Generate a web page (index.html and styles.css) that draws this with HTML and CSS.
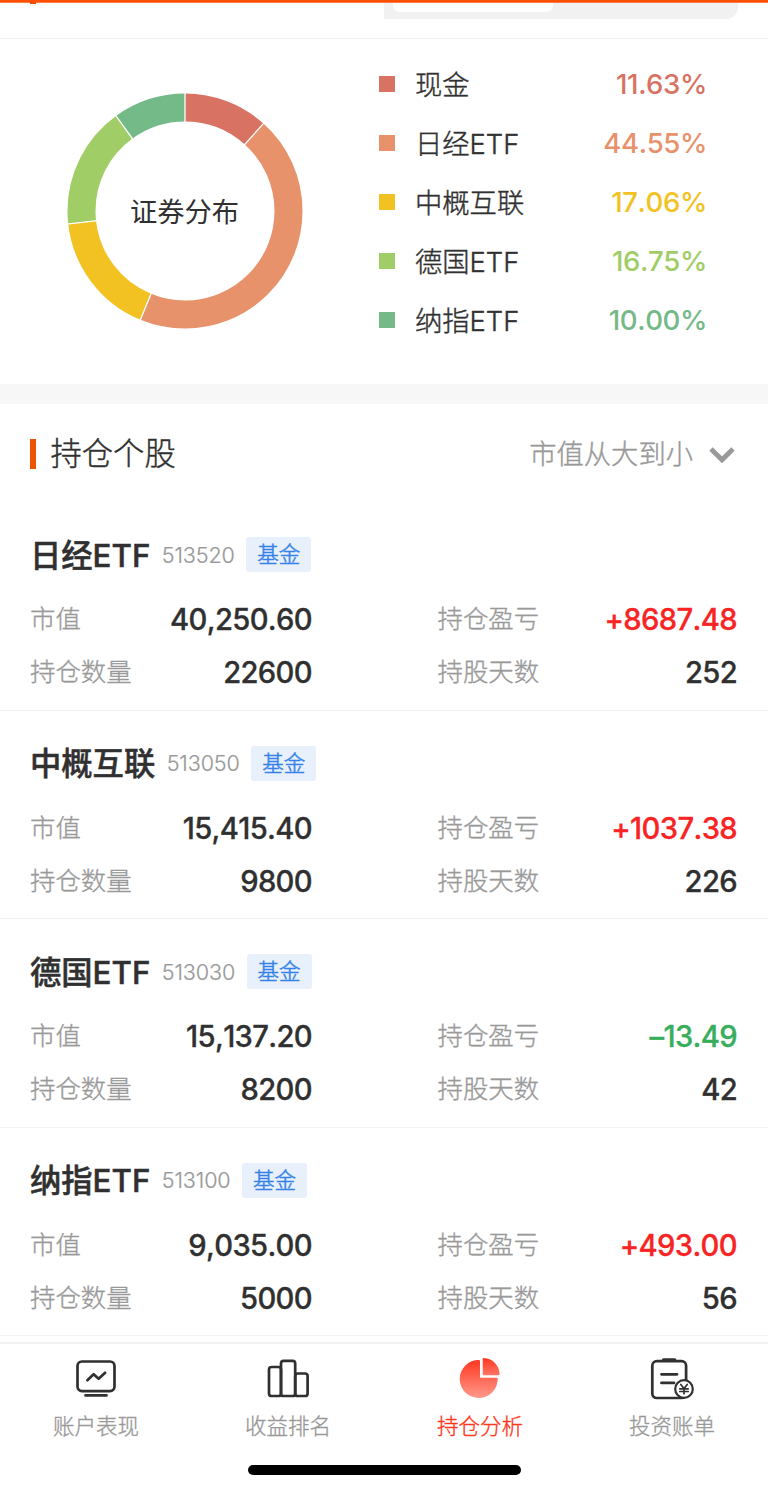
FILE: index.html
```html
<!DOCTYPE html>
<html lang="zh-CN">
<head>
<meta charset="utf-8">
<title>持仓分析</title>
<link rel="stylesheet" href="styles.css">
</head>
<body>
<div class="screen">
  <header class="top">
    <div class="segment"><div class="segment-thumb"></div></div>
    <div class="progress"></div>
    <div class="marker"></div>
  </header>

  <section class="distribution">
    <svg class="donut" viewBox="0 0 240 240">
      <g fill="none" stroke-width="28" transform="rotate(-90 120 120)">
        <circle cx="120" cy="120" r="103.5" pathLength="100" stroke="#d87263" stroke-dasharray="11.64 88.36"/>
        <circle cx="120" cy="120" r="103.5" pathLength="100" stroke="#e7926b" stroke-dasharray="44.55 55.45" stroke-dashoffset="-11.64"/>
        <circle cx="120" cy="120" r="103.5" pathLength="100" stroke="#f2c122" stroke-dasharray="17.06 82.94" stroke-dashoffset="-56.19"/>
        <circle cx="120" cy="120" r="103.5" pathLength="100" stroke="#a0cd65" stroke-dasharray="16.75 83.25" stroke-dashoffset="-73.25"/>
        <circle cx="120" cy="120" r="103.5" pathLength="100" stroke="#74b988" stroke-dasharray="10 90" stroke-dashoffset="-90"/>
      </g>
      <g stroke="#fff" stroke-width="1.3">
        <path d="M120 32V1"/>
        <path d="M120 32V1" transform="rotate(41.9 120 120)"/>
        <path d="M120 32V1" transform="rotate(202.3 120 120)"/>
        <path d="M120 32V1" transform="rotate(263.7 120 120)"/>
        <path d="M120 32V1" transform="rotate(324 120 120)"/>
      </g>
    </svg>
    <div class="donut-title">证券分布</div>
    <ul class="legend">
      <li class="cash"><i></i><span>现金</span><b>11.63%</b></li>
      <li class="nikkei"><i></i><span>日经ETF</span><b>44.55%</b></li>
      <li class="china"><i></i><span>中概互联</span><b>17.06%</b></li>
      <li class="germany"><i></i><span>德国ETF</span><b>16.75%</b></li>
      <li class="nasdaq"><i></i><span>纳指ETF</span><b>10.00%</b></li>
    </ul>
  </section>

  <section class="holdings">
    <div class="section-head">
      <h2>持仓个股</h2>
      <div class="sort">市值从大到小
        <svg viewBox="0 0 28 18"><path d="M3 3l11 10.8L25 3" fill="none" stroke="#999" stroke-width="4.8"/></svg>
      </div>
    </div>

    <article class="stock">
      <div class="stock-name"><h3>日经ETF</h3><span class="code">513520</span><span class="tag">基金</span></div>
      <dl>
        <dt>市值</dt><dd>40,250.60</dd><dt>持仓盈亏</dt><dd class="up">+8687.48</dd>
        <dt>持仓数量</dt><dd>22600</dd><dt>持股天数</dt><dd>252</dd>
      </dl>
    </article>
    <article class="stock">
      <div class="stock-name"><h3>中概互联</h3><span class="code">513050</span><span class="tag">基金</span></div>
      <dl>
        <dt>市值</dt><dd>15,415.40</dd><dt>持仓盈亏</dt><dd class="up">+1037.38</dd>
        <dt>持仓数量</dt><dd>9800</dd><dt>持股天数</dt><dd>226</dd>
      </dl>
    </article>
    <article class="stock">
      <div class="stock-name"><h3>德国ETF</h3><span class="code">513030</span><span class="tag">基金</span></div>
      <dl>
        <dt>市值</dt><dd>15,137.20</dd><dt>持仓盈亏</dt><dd class="down">–13.49</dd>
        <dt>持仓数量</dt><dd>8200</dd><dt>持股天数</dt><dd>42</dd>
      </dl>
    </article>
    <article class="stock">
      <div class="stock-name"><h3>纳指ETF</h3><span class="code">513100</span><span class="tag">基金</span></div>
      <dl>
        <dt>市值</dt><dd>9,035.00</dd><dt>持仓盈亏</dt><dd class="up">+493.00</dd>
        <dt>持仓数量</dt><dd>5000</dd><dt>持股天数</dt><dd>56</dd>
      </dl>
    </article>
  </section>

  <nav class="tabbar">
    <div class="tabs">
      <div class="tab">
        <svg viewBox="0 0 48 48" fill="none" stroke="#303030" stroke-width="2.7" stroke-linecap="round" stroke-linejoin="round">
          <rect x="5.5" y="7.5" width="37" height="29.6" rx="4.5"/>
          <path d="M13.5 41.4h21M15.4 26.2l6.2-6 5 4.6 6.5-6"/>
        </svg>
        <span>账户表现</span>
      </div>
      <div class="tab">
        <svg viewBox="0 0 48 48" fill="none" stroke="#303030" stroke-width="2.7">
          <rect x="5" y="13" width="12" height="29" rx="2.6"/>
          <rect x="17" y="6.8" width="14.2" height="35.2" rx="2.6"/>
          <rect x="31.2" y="19.5" width="12.4" height="22.5" rx="2.6"/>
        </svg>
        <span>收益排名</span>
      </div>
      <div class="tab active">
        <svg viewBox="0 0 48 48">
          <defs>
            <linearGradient id="pie" x1="0" y1="6" x2="0" y2="44" gradientUnits="userSpaceOnUse"><stop stop-color="#ff3720"/><stop offset="1" stop-color="#ff9a8c"/></linearGradient>
            <linearGradient id="slice" x1="0" y1="4" x2="0" y2="21" gradientUnits="userSpaceOnUse"><stop stop-color="#ff3720"/><stop offset="1" stop-color="#ff7564"/></linearGradient>
          </defs>
          <path fill="url(#pie)" d="M23 6A19 19 0 1 0 41.7 24.6Q41.7 23.7 40.7 23.7H25Q24 23.7 24 22.7V7Q24 6 23 6Z"/>
          <path fill="url(#slice)" d="M27.7 4A16.5 16.5 0 0 1 43.6 20.2Q43.6 21.2 42.6 21.2H27.7Q26.7 21.2 26.7 20.2V5Q26.7 4 27.7 4Z"/>
        </svg>
        <span>持仓分析</span>
      </div>
      <div class="tab">
        <svg viewBox="0 0 48 48" fill="none" stroke="#303030" stroke-width="2.7" stroke-linecap="round" stroke-linejoin="round">
          <rect x="4.3" y="7.2" width="33.8" height="36.8" rx="4.5"/>
          <path d="M15.5 5.9h11.2" stroke-width="3.4"/>
          <path d="M13.5 20.3h15.5M13.5 28.9H26" stroke-width="2.8"/>
          <circle cx="36" cy="35" r="8.8" fill="#fff" stroke-width="2.2"/>
          <path d="M32.8 30.5l3.2 4 3.2-4M36 34.7v5M31.8 34.8h8.4M31.8 37.5h8.4" stroke-width="1.7"/>
        </svg>
        <span>投资账单</span>
      </div>
    </div>
    <div class="home-indicator"></div>
  </nav>
</div>
</body>
</html>
```
FILE: styles.css
```css
* { box-sizing: border-box; margin: 0; padding: 0; }
body {
  background: #fff;
  color: #303030;
  font-family: Inter, "Noto Sans CJK SC", sans-serif;
}
.screen {
  display: flex;
  flex-direction: column;
  width: 768px;
  height: 1492px;
  overflow: hidden;
}

.top { position: relative; height: 39px; border-bottom: 1px solid #f3f3f3; flex: none; }
.progress {
  position: absolute; top: 0; left: 0;
  width: 100%; height: 3px;
  background: #ff4f04;
  border-bottom: 1px solid #ff7b42;
}
.marker { position: absolute; top: 2px; left: 30px; width: 6px; height: 2px; background: #f04e06; }
.segment {
  width: 354px; height: 18.5px;
  margin-left: 384px; padding-left: 9px;
  background: #f1f1f1;
  border-radius: 0 0 12px 0;
}
.segment-thumb { width: 160px; height: 12px; background: #fff; border-radius: 0 0 7px 7px; }

.distribution {
  display: grid;
  grid-template-columns: 379px 328px;
  height: 365px;
  flex: none;
  border-bottom: 20px solid #f7f7f7;
}
.donut, .donut-title { grid-column: 1; grid-row: 1; }
.donut { width: 240px; height: 240px; margin: 52px 0 0 65px; }
.donut-title { margin: 154px 0 0 64.5px; width: 240px; text-align: center; font-size: 27.3px; line-height: 40px; }
.legend { grid-column: 2; grid-row: 1; list-style: none; padding-top: 15px; }
.legend li { display: flex; align-items: center; height: 59.1px; }
.legend i { width: 16px; height: 16px; background: currentColor; margin-right: 20px; }
.legend span { flex: 1; padding-bottom: 2px; color: #303030; font-size: 27.3px; font-weight: 300; -webkit-text-stroke: 0.4px; }
.legend b { font-size: 27.6px; font-weight: 500; letter-spacing: -0.4px; font-kerning: none; }
.cash { color: #d87263; }
.nikkei { color: #e7926b; }
.china { color: #f2c122; }
.germany { color: #a0cd65; }
.nasdaq { color: #74b988; }

.section-head {
  display: flex; align-items: center; justify-content: space-between;
  height: 98px;
  padding: 1px 32px 0 30px;
}
.section-head h2 {
  display: flex; align-items: center; gap: 14.5px;
  font-size: 31.3px; font-weight: 300; line-height: 40px; -webkit-text-stroke: 0.4px;
}
.section-head h2::before { content: ""; width: 6px; height: 30px; background: #eb5405; }
.sort { display: flex; align-items: center; gap: 15px; padding-top: 2px; color: #999; font-size: 27.3px; font-weight: 300; line-height: 40px; -webkit-text-stroke: 0.4px; }
.sort svg { width: 28px; height: 18px; }

.stock { height: 208.5px; border-bottom: 1px solid #f3f3f3; padding: 32.5px 31px 0 30px; }
.stock-name { display: flex; align-items: center; height: 40px; }
.stock-name h3 { font-size: 31.3px; font-weight: 500; line-height: 40px; padding-top: 2px; -webkit-text-stroke: 0.5px; }
.code { margin-left: 11.5px; color: #999; font-size: 21.6px; font-weight: 300; letter-spacing: -0.15px; -webkit-text-stroke: 0.2px; }
.tag {
  margin-left: 11.5px; width: 65px; height: 35px;
  background: #e8f0fc; border-radius: 3px;
  color: #3482e8; font-size: 21.5px; font-weight: 300; line-height: 34px; text-align: center;
  -webkit-text-stroke: 0.5px;
}
.stock dl {
  display: grid;
  grid-template-rows: 53px 53px;
  grid-template-columns: 120px 162px 246px 1fr;
  padding-top: 18.5px;
  line-height: 53px;
}
.stock dt { color: #999; font-size: 25.4px; font-weight: 300; line-height: 52px; -webkit-text-stroke: 0.35px; }
.stock dt:nth-of-type(even) { padding-left: 125.5px; }
.stock dd { text-align: right; font-size: 29.2px; font-weight: 500; letter-spacing: -0.65px; font-kerning: none; -webkit-text-stroke: 0.3px; }
.stock .up { color: #f82323; }
.stock .down { color: #37ae5b; }

.tabbar {
  position: absolute; top: 1342px; left: 0;
  width: 768px; height: 150px;
  background: #fff;
  border-top: 2px solid #f1f1f1;
}
.tabs { display: grid; grid-template-columns: repeat(4, 1fr); padding-top: 10px; }
.tab { display: flex; flex-direction: column; align-items: center; color: #999; font-size: 21.5px; font-weight: 300; -webkit-text-stroke: 0.35px; }
.tab svg { width: 48px; height: 48px; }
.tab span { line-height: 32px; margin-top: 8px; }
.tab.active { color: #ff3720; }
.home-indicator { width: 273px; height: 10px; margin: 23px auto 0; background: #000; border-radius: 5px; }
```
